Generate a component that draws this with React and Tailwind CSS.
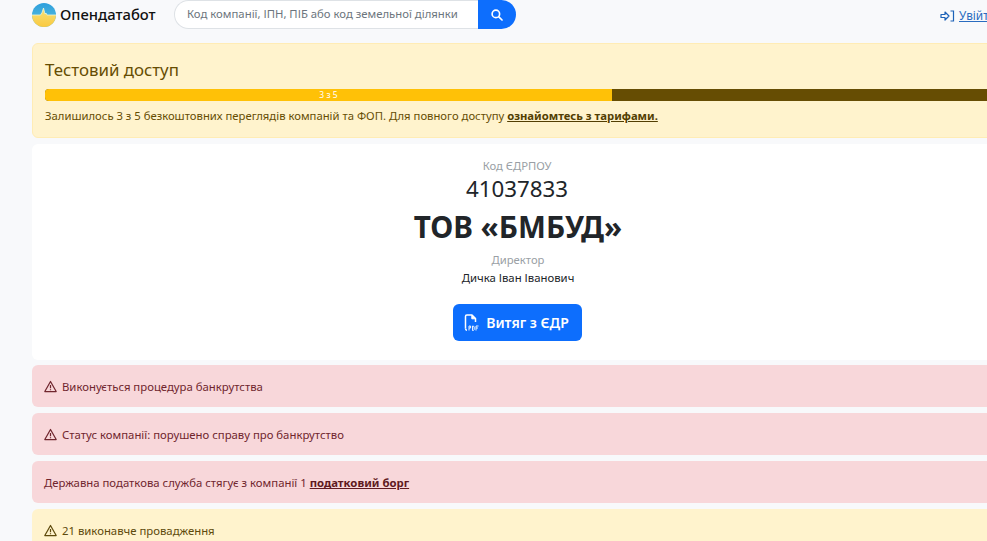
import React from "react";

const font = { fontFamily: '"Noto Sans", "Open Sans", sans-serif' };

function Logo() {
  return (
    <svg width="24" height="24" viewBox="0 0 24 24" className="shrink-0">
      <defs>
        <linearGradient id="by" x1="0" y1="0" x2="0" y2="1">
          <stop offset="0" stopColor="#2d9fdd" />
          <stop offset="1" stopColor="#62c4dc" />
        </linearGradient>
        <linearGradient id="yl" x1="0" y1="0" x2="0" y2="1">
          <stop offset="0" stopColor="#f6e27a" />
          <stop offset="1" stopColor="#fac93f" />
        </linearGradient>
        <clipPath id="cc">
          <circle cx="12" cy="12" r="12" />
        </clipPath>
      </defs>
      <g clipPath="url(#cc)">
        <rect width="24" height="24" fill="url(#by)" />
        <path d="M0 12H8.500L10 9.500L11.500 5L13 11L14 10L15 12H24V24H0Z" fill="url(#yl)" />
        <path d="M0 12H8.500L10 9.500L11.500 5L13 11L14 10L15 12H24" fill="none" stroke="#eef6d8" strokeWidth="0.8" />
      </g>
    </svg>
  );
}

function Warn() {
  return (
    <svg width="13" height="13" viewBox="0 0 16 16" fill="none" stroke="currentColor" className="shrink-0">
      <path d="M8 1.800L15 14.200H1Z" strokeWidth="1.500" strokeLinejoin="round" />
      <path d="M8 6V10M8 11.300V12.700" strokeWidth="1.500" />
    </svg>
  );
}

function Alert({ tone, icon, children }) {
  const cls =
    tone === "danger"
      ? "bg-[#f8d7da] text-[#70262e]"
      : "bg-[#fff3cd] text-[#5e4a0c]";
  return (
    <div className={`${cls} h-[42px] shrink-0 rounded-md px-3 flex items-center gap-[5px] text-[11.35px]`}>
      {icon && <Warn />}
      <span className="whitespace-nowrap pt-[2px]">{children}</span>
    </div>
  );
}

export default function App() {
  return (
    <div className="h-[541px] w-full overflow-hidden bg-[#f8f9fb]" style={font}>
      <div className="w-[1036px] px-8">
        <header className="h-[29px] flex items-center">
          <Logo />
          <span className="ml-[4px] w-[114px] text-[14.8px] font-medium text-[#111] whitespace-nowrap">Опендатабот</span>
          <div className="flex h-[29px] w-[342px]">
            <div className="flex-1 bg-white border border-[#dee2e6] border-r-0 rounded-l-full pl-[12px] flex items-center text-[11.33px] text-[#6c757d] whitespace-nowrap">
              Код компанії, ІПН, ПІБ або код земельної ділянки
            </div>
            <div className="w-[38px] bg-[#0d6efd] rounded-r-full flex items-center justify-center">
              <svg width="12" height="12" viewBox="0 0 16 16" fill="none" stroke="#fff" strokeWidth="2.200" strokeLinecap="round">
                <circle cx="6.500" cy="6.500" r="5" />
                <path d="M10.500 10.500L14.700 14.700" />
              </svg>
            </div>
          </div>
          <a className="ml-[424px] pt-[2px] flex items-center gap-[4px] text-[#2a6cc0] text-[11.8px] underline whitespace-nowrap">
            <svg width="15" height="12" viewBox="0 0 15 12" fill="none" stroke="#1c62b8" strokeWidth="1.200" className="shrink-0">
              <path d="M1 4.500H5V2L9 6L5 10V7.500H1Z" strokeLinejoin="round" />
              <path d="M10.500 1H13.500V11H10.500" />
            </svg>
            Увійти
          </a>
        </header>

        <section className="mt-[14px] h-[95px] bg-[#fff3cd] border border-[#ffecb5] rounded-md px-3 pt-[14px] text-[#664d03]">
          <h4 className="text-[16.85px] leading-[24px] whitespace-nowrap">Тестовий доступ</h4>
          <div className="mt-[7px] h-3 w-[945px] flex rounded-[4px] overflow-hidden bg-[#664d03]">
            <div className="w-[567px] bg-[#ffc107] text-white text-[8.5px] leading-3 text-center whitespace-nowrap">3 з 5</div>
          </div>
          <p className="mt-[6px] text-[11.29px] leading-[18px] whitespace-nowrap">
            Залишилось 3 з 5 безкоштовних переглядів компаній та ФОП. Для повного доступу{" "}
            <a className="font-bold underline text-[#523e02]">ознайомтесь з тарифами.</a>
          </p>
        </section>

        <section className="mt-[6px] h-[216px] bg-white rounded-md flex flex-col items-center pt-[13px] text-center">
          <div className="mr-[2px] text-[11.27px] leading-[17px] text-[#9a9fa5]">Код ЄДРПОУ</div>
          <div className="mr-[2px] text-[22.3px] leading-[30px] text-[#212529]">41037833</div>
          <h1 className="mt-[3px] text-[29.6px] leading-[40px] font-bold text-[#212529] whitespace-nowrap">ТОВ «БМБУД»</h1>
          <div className="mt-[4px] text-[11.27px] leading-[18px] text-[#9a9fa5]">Директор</div>
          <div className="text-[11.35px] leading-[18px] text-[#212529]">Дичка Іван Іванович</div>
          <button className="mr-[2px] mt-[17px] h-[37px] w-[129px] bg-[#0d6efd] rounded-md text-white text-[14px] font-semibold flex items-center justify-center gap-[6px] whitespace-nowrap">
            <svg width="17" height="18" viewBox="0 0 17 18" fill="none" stroke="#fff" strokeWidth="1.500" className="shrink-0 -ml-[2px]">
              <path d="M2.500 14.500V2.500C2.500 1.700 3 1 3.800 1H9L12.500 4.500V8" strokeLinejoin="round" />
              <path d="M8.800 1.200V4.800H12.500" fill="#fff" strokeLinejoin="round" strokeWidth="1" />
              <path d="M2.500 14.500C2.500 15.500 3 16.200 4 16.200" />
              <path d="M6 12v4.500M6 12h1.600v2H6M9.500 12v4.500M9.500 12h.9l.8 1v2.500l-.8 1H9.500M13 12v4.500M13 12h2.500M13 14h2" strokeWidth="0.900" />
            </svg>
            Витяг з ЄДР
          </button>
        </section>

        <div className="mt-[5px] flex flex-col gap-[6px]">
          <Alert tone="danger" icon>Виконується процедура банкрутства</Alert>
          <Alert tone="danger" icon>Статус компанії: порушено справу про банкрутство</Alert>
          <Alert tone="danger">
            Державна податкова служба стягує з компанії 1{" "}
            <a className="font-bold underline text-[#5f1a21]">податковий борг</a>
          </Alert>
          <Alert tone="warning" icon>21 виконавче провадження</Alert>
        </div>
      </div>
    </div>
  );
}
